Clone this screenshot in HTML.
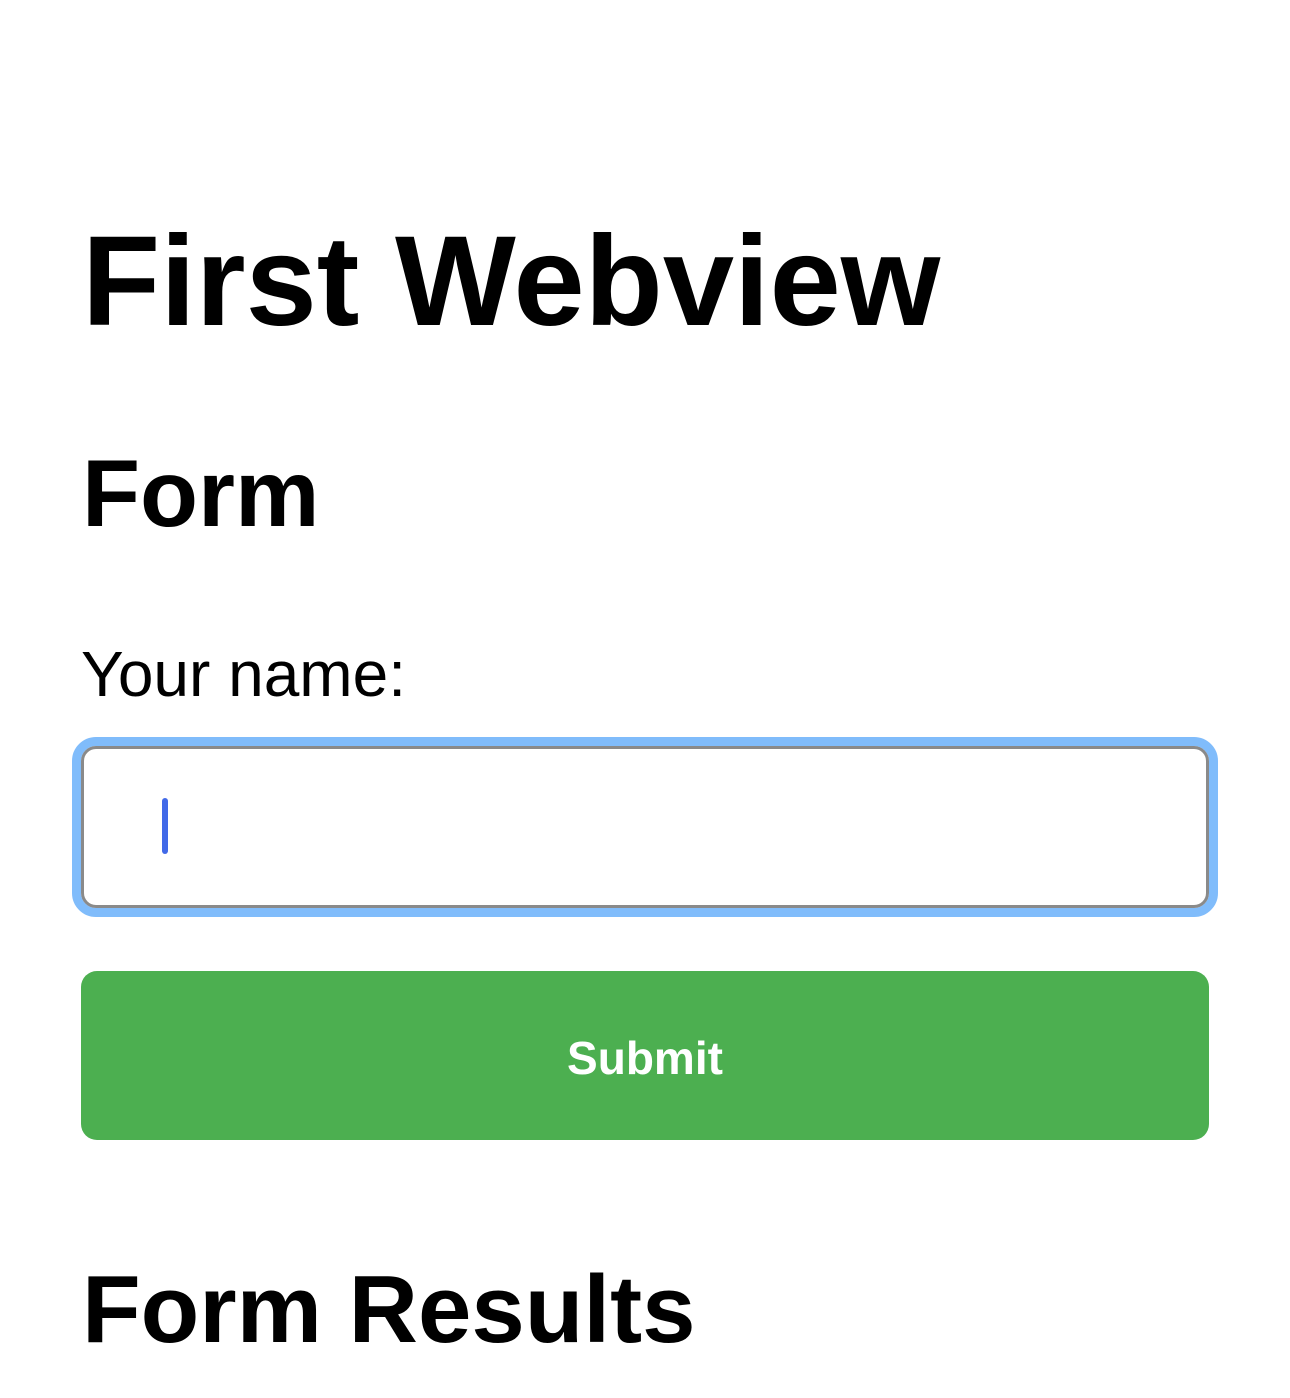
<!DOCTYPE html>
<html><head><meta charset="utf-8"><style>
html,body{margin:0;padding:0;background:#fff;width:1290px;height:1398px;overflow:hidden;font-family:"Liberation Sans",Arial,sans-serif;color:#000}
.t{position:absolute;left:82px;line-height:1;white-space:nowrap;margin:0}
.ring{position:absolute;left:72px;top:737px;width:1146px;height:180px;box-sizing:border-box;border:9px solid #80bcfb;border-radius:24px}
.inp{position:absolute;left:81px;top:746px;width:1128px;height:162px;box-sizing:border-box;border:3px solid #8a8a8a;border-radius:15px;background:#fff}
.cur{position:absolute;left:162px;top:798px;width:6px;height:56px;border-radius:3px;background:#4169e8}
.btn{position:absolute;left:81px;top:971px;width:1128px;height:169px;background:#4caf50;border-radius:16px}
.sub{position:absolute;left:0;width:1290px;text-align:center;top:1035px;line-height:1;font-size:46px;font-weight:bold;color:#fff}
</style></head><body>
<h1 class="t" style="top:218px;font-size:128px;font-weight:bold">First Webview</h1>
<h2 class="t" style="top:447px;font-size:95px;font-weight:bold">Form</h2>
<div class="t" style="top:642px;font-size:64px;left:81px">Your name:</div>
<div class="ring"></div>
<div class="inp"></div>
<div class="cur"></div>
<div class="btn"></div>
<div class="sub">Submit</div>
<h2 class="t" style="top:1262px;font-size:96px;font-weight:bold">Form Results</h2>
</body></html>
